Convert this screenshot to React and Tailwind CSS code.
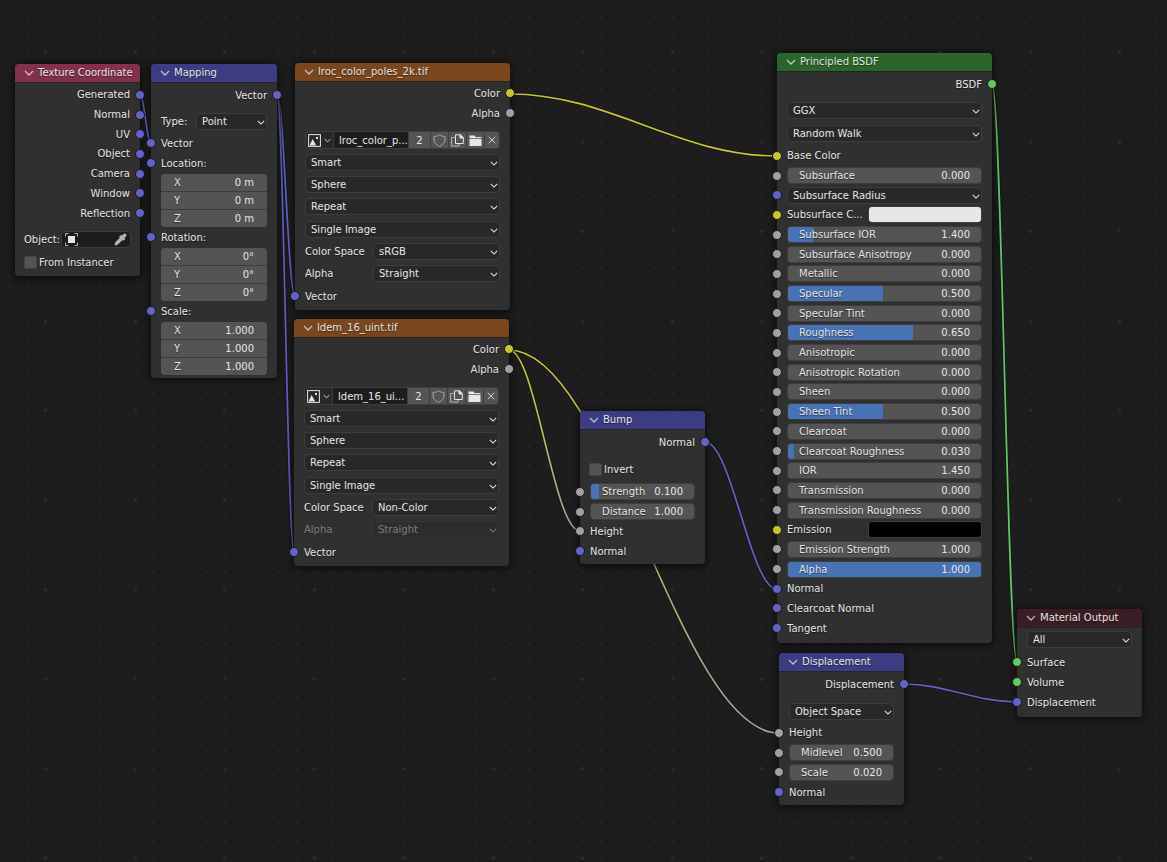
import React, { useId, useState } from "react";
import { Pipette } from "lucide-react";

const SOCKETS = {
  vector: { bg: "bg-[#6363c7]", hex: "#6363c7" },
  value: { bg: "bg-[#a1a1a1]", hex: "#a1a1a1" },
  color: { bg: "bg-[#c7c729]", hex: "#c7c729" },
  shader: { bg: "bg-[#63c763]", hex: "#63c763" },
};

const LINKS = [
  { from: [140, 95], to: [151, 143], types: ["vector", "vector"] },
  { from: [277, 95], to: [295, 297], types: ["vector", "vector"] },
  { from: [277, 95], to: [294, 553], types: ["vector", "vector"] },
  { from: [510, 94], to: [777, 156], types: ["color", "color"] },
  { from: [509, 350], to: [779, 733], types: ["color", "value"] },
  { from: [509, 350], to: [580, 531], types: ["color", "value"] },
  { from: [705, 442], to: [777, 589], types: ["vector", "vector"] },
  { from: [992, 84], to: [1017, 662], types: ["shader", "shader"] },
  { from: [904, 684], to: [1017, 702], types: ["vector", "vector"] },
];

// how far the bezier handles reach, as a share of the horizontal distance
const BEND = 0.37;

const BSDF_ROWS = [
  { type: "color", label: "Base Color" },
  { type: "value", label: "Subsurface", value: "0.000", fill: 0 },
  { type: "vector", label: "Subsurface Radius", kind: "select" },
  { type: "color", label: "Subsurface C...", kind: "swatch", value: "#e7e7e7" },
  { type: "value", label: "Subsurface IOR", value: "1.400", fill: 13 },
  { type: "value", label: "Subsurface Anisotropy", value: "0.000", fill: 0 },
  { type: "value", label: "Metallic", value: "0.000", fill: 0 },
  { type: "value", label: "Specular", value: "0.500", fill: 49 },
  { type: "value", label: "Specular Tint", value: "0.000", fill: 0 },
  { type: "value", label: "Roughness", value: "0.650", fill: 65 },
  { type: "value", label: "Anisotropic", value: "0.000", fill: 0 },
  { type: "value", label: "Anisotropic Rotation", value: "0.000", fill: 0 },
  { type: "value", label: "Sheen", value: "0.000", fill: 0 },
  { type: "value", label: "Sheen Tint", value: "0.500", fill: 49 },
  { type: "value", label: "Clearcoat", value: "0.000", fill: 0 },
  { type: "value", label: "Clearcoat Roughness", value: "0.030", fill: 3 },
  { type: "value", label: "IOR", value: "1.450", fill: 0 },
  { type: "value", label: "Transmission", value: "0.000", fill: 0 },
  { type: "value", label: "Transmission Roughness", value: "0.000", fill: 0 },
  { type: "color", label: "Emission", kind: "swatch", value: "#000000" },
  { type: "value", label: "Emission Strength", value: "1.000", fill: 0 },
  { type: "value", label: "Alpha", value: "1.000", fill: 100 },
  { type: "vector", label: "Normal" },
  { type: "vector", label: "Clearcoat Normal" },
  { type: "vector", label: "Tangent" },
];

function Grid() {
  const steps = [0, 1, 2, 3, 4, 5, 6, 7, 8, 9];
  const at = (i) => Math.round(10 + i * 17.9);
  return (
    <svg className="absolute inset-0 w-full h-full" aria-hidden="true">
      <defs>
        <pattern id="dots" x="35" y="42" width="179" height="179" patternUnits="userSpaceOnUse">
          {steps.map((i) =>
            steps.map((j) =>
              i % 5 === 0 && j % 5 === 0 ? (
                <rect key={`${i}-${j}`} x={at(i) - 1} y={at(j) - 1} width="3" height="3" fill="#2a2a2a" />
              ) : (
                <rect key={`${i}-${j}`} x={at(i)} y={at(j)} width="2" height="2" fill="#272727" />
              )
            )
          )}
        </pattern>
      </defs>
      <rect width="100%" height="100%" fill="url(#dots)" />
    </svg>
  );
}

function Links() {
  return (
    <svg className="absolute inset-0 w-full h-full" fill="none" aria-hidden="true">
      {LINKS.map(({ from, to, types }, i) => {
        const [x1, y1] = from;
        const [x2, y2] = to;
        const reach = (x2 - x1) * BEND;
        const d = `M${x1} ${y1}C${x1 + reach} ${y1} ${x2 - reach} ${y2} ${x2} ${y2}`;
        return (
          <g key={i}>
            <linearGradient id={`link${i}`} gradientUnits="userSpaceOnUse" x1={x1} y1={y1} x2={x2} y2={y2}>
              <stop offset="0" stopColor={SOCKETS[types[0]].hex} />
              <stop offset="1" stopColor={SOCKETS[types[1]].hex} />
            </linearGradient>
            <path d={d} stroke="#101010" strokeOpacity="0.6" strokeWidth="3.4" />
            <path d={d} stroke={`url(#link${i})`} strokeWidth="1.7" />
          </g>
        );
      })}
    </svg>
  );
}

function Chevron({ className }) {
  return (
    <svg viewBox="0 0 10 6" className={className} fill="none" stroke="currentColor" aria-hidden="true">
      <path d="M1 1l4 4 4-4" strokeWidth="1.3" />
    </svg>
  );
}

function Node({ title, place, header, children }) {
  const [open, setOpen] = useState(true);
  return (
    <section className={`absolute rounded-sm bg-[#303030] shadow-[0_1px_7px_2px_rgba(0,0,0,0.55)] ${place}`}>
      <header className={`h-[19px] rounded-t-sm border-b border-[#242424] flex items-center gap-1 pl-[9px] ${header}`}>
        <button aria-label={`Collapse ${title}`} onClick={() => setOpen(!open)} className="text-white/65">
          <Chevron className="w-2.5 h-1.5" />
        </button>
        <h2 className="leading-[18px]">{title}</h2>
      </header>
      {open && children}
    </section>
  );
}

function Socket({ type, side }) {
  return (
    <span
      className={`absolute top-1/2 -translate-y-1/2 size-[10px] rounded-full border border-[#1a1a1a] ${SOCKETS[type].bg} ${
        side === "out" ? "-right-[5px]" : "-left-[5px]"
      }`}
    />
  );
}

function Output({ type, label }) {
  return (
    <div className="relative min-h-[19px] px-2.5 flex items-center justify-end">
      {label}
      <Socket type={type} side="out" />
    </div>
  );
}

function Input({ type, label, children }) {
  return (
    <div className="relative min-h-[19px] px-2.5 flex items-center">
      <Socket type={type} side="in" />
      {children || label}
    </div>
  );
}

function Select({ value, id, label, disabled }) {
  return (
    <div className={`relative flex flex-1 min-w-0 ${disabled ? "opacity-40" : ""}`}>
      <select
        id={id}
        aria-label={label}
        disabled={disabled}
        className="w-full h-[17px] appearance-none rounded-sm border border-[#3d3d3d] bg-[#282828] pl-[5px] pr-4 leading-[15px]"
      >
        <option>{value}</option>
      </select>
      <Chevron className="absolute right-[2px] top-[7px] w-2 h-[5px] pointer-events-none" />
    </div>
  );
}

function LabeledSelect({ label, value, labelWidth, disabled }) {
  const id = useId();
  return (
    <div className="flex items-center px-2.5">
      <label htmlFor={id} className={`${labelWidth} ${disabled ? "opacity-40" : ""}`}>
        {label}
      </label>
      <Select id={id} value={value} disabled={disabled} />
    </div>
  );
}

function NumberField({ label, value, fill = 0, joined }) {
  return (
    <label
      className={`relative flex-1 h-[17px] flex items-center overflow-hidden bg-[#545454] ${
        joined ? "px-[13px]" : "px-[11px] rounded-sm border border-[#3d3d3d]"
      }`}
    >
      <span className="absolute inset-y-0 left-0 bg-[#4772b3]" style={{ width: `${fill}%` }} />
      <span className="relative whitespace-nowrap">{label}</span>
      <input type="text" defaultValue={value} className="relative flex-1 w-9 min-w-0 bg-transparent text-right" />
    </label>
  );
}

function Swatch({ label, value }) {
  const id = useId();
  return (
    <>
      <label htmlFor={id} className="flex-1">
        {label}
      </label>
      <input
        id={id}
        type="color"
        defaultValue={value}
        className="w-[114px] h-[17px] appearance-none rounded-sm overflow-hidden border border-[#3d3d3d] [&::-webkit-color-swatch]:border-0 [&::-webkit-color-swatch-wrapper]:p-0"
      />
    </>
  );
}

function Checkbox({ label }) {
  return (
    <label className="h-[18px] flex items-center gap-[2px] px-[9px]">
      <input type="checkbox" className="size-[13px] appearance-none rounded-xs bg-[#545454] border border-[#454545] checked:bg-[#4772b3]" />
      {label}
    </label>
  );
}

function VectorInput({ label, values }) {
  return (
    <>
      <div className="h-5 grid">
        <Input type="vector" label={label} />
      </div>
      <div className="mx-2.5 mt-px flex flex-col gap-px rounded-sm overflow-hidden bg-[#3d3d3d]">
        {["X", "Y", "Z"].map((axis, i) => (
          <div key={axis} className="flex">
            <NumberField label={axis} value={values[i]} joined />
          </div>
        ))}
      </div>
    </>
  );
}

function ImageBlock({ name }) {
  const cell = "grid place-items-center bg-[#545454]";
  return (
    <div className="mt-2 mx-2.5 h-[18px] flex gap-px rounded-sm overflow-hidden border border-[#3d3d3d] bg-[#3d3d3d]">
      <button aria-label="Browse image" className="w-[27px] flex items-center justify-center gap-[3px] bg-[#282828]">
        <svg viewBox="0 0 13 13" className="size-[13px] shrink-0" aria-hidden="true">
          <rect x="0.6" y="0.6" width="11.8" height="11.8" fill="none" stroke="#e6e6e6" strokeWidth="1" />
          <path d="M1.5 11.5L4.6 5l3.6 6.5z" fill="#e6e6e6" />
          <rect x="8" y="3" width="2" height="2" fill="#e6e6e6" />
        </svg>
        <Chevron className="w-[7px] h-[5px] shrink-0" />
      </button>
      <input aria-label="Image name" type="text" defaultValue={name} className="w-[74px] min-w-0 bg-[#1d1d1d] pl-[5px]" />
      <button aria-label="Users" className={`w-[21px] ${cell}`}>2</button>
      <button aria-label="Fake user" className={`w-[17px] ${cell}`}>
        <svg viewBox="0 0 13 13" className="size-[13px]" fill="none" stroke="#a6a6a6" aria-hidden="true">
          <path d="M6.5 0.8C5 2 3 2.5 1 2.5V6c0 3 2.5 5 5.5 6.4C9.5 11 12 9 12 6V2.5C10 2.5 8 2 6.500 0.800z" />
        </svg>
      </button>
      <button aria-label="New image" className={`w-[17px] ${cell}`}>
        <svg viewBox="0 0 13 13" className="size-[13px]" fill="none" stroke="#e6e6e6" aria-hidden="true">
          <path d="M3.5 3.5H0.6V12H8V9.5" stroke="#b5b5b5" />
          <path d="M4.5 0.8H9.5L12.3 3.5V9.5H4.500z" />
          <path d="M9 0.8V4H12.3z" fill="#e6e6e6" />
        </svg>
      </button>
      <button aria-label="Open image" className={`w-[17px] ${cell}`}>
        <svg viewBox="0 0 13 13" className="size-[13px]" fill="#e6e6e6" aria-hidden="true">
          <path d="M0.5 1.5H5.5L6.5 3H12.5V4.2H0.500z" />
          <path d="M0.5 5H12.5V12H0.500z" />
        </svg>
      </button>
      <button aria-label="Unlink image" className={`flex-1 ${cell}`}>
        <svg viewBox="0 0 8 8" className="size-2" stroke="#d0d0d0" aria-hidden="true">
          <path d="M0.8 0.8l6.4 6.4M7.2 0.8L0.8 7.2" />
        </svg>
      </button>
    </div>
  );
}

function ImageTexture({ title, name, place, colorSpace, alphaOff }) {
  return (
    <Node title={title} place={`w-[215px] pb-1 ${place}`} header="bg-[#79461d]">
      <div className="mt-px h-10 grid auto-rows-fr">
        <Output type="color" label="Color" />
        <Output type="value" label="Alpha" />
      </div>
      <ImageBlock name={name} />
      <div className="mt-0.5 h-[134px] grid auto-rows-fr items-center">
        {["Smart", "Sphere", "Repeat", "Single Image"].map((option) => (
          <div key={option} className="flex px-2.5">
            <Select value={option} label={option} />
          </div>
        ))}
        <LabeledSelect label="Color Space" value={colorSpace} labelWidth="w-[68px]" />
        <LabeledSelect label="Alpha" value="Straight" labelWidth="w-[68px]" disabled={alphaOff} />
      </div>
      <div className="mt-px h-5 grid">
        <Input type="vector" label="Vector" />
      </div>
    </Node>
  );
}

function TextureCoordinate() {
  return (
    <Node title="Texture Coordinate" place="left-[15px] top-[64px] w-[125px] pb-[5px]" header="bg-[#83314a]">
      <div className="mt-0.5 h-[138px] grid auto-rows-fr">
        {["Generated", "Normal", "UV", "Object", "Camera", "Window", "Reflection"].map((name) => (
          <Output key={name} type="vector" label={name} />
        ))}
      </div>
      <div className="mt-2 px-[9px] flex items-center">
        Object:
        <button
          aria-label="Pick object"
          className="ml-auto w-[70px] shrink-0 h-[17px] px-[3px] flex items-center justify-between rounded-sm border border-[#3d3d3d] bg-[#1d1d1d]"
        >
          <svg viewBox="0 0 13 13" className="size-[13px]" aria-hidden="true">
            <rect x="3" y="3" width="7" height="7" fill="#e6e6e6" />
            <path
              d="M0.5 3.5V0.5H3.5M9.5 0.5H12.5V3.5M12.5 9.5V12.5H9.5M3.5 12.5H0.5V9.5"
              fill="none"
              stroke="#b0b0b0"
            />
          </svg>
          <Pipette className="size-[13px]" fill="#b0b0b0" color="#b8b8b8" />
        </button>
      </div>
      <div className="mt-[5px]">
        <Checkbox label="From Instancer" />
      </div>
    </Node>
  );
}

function Mapping() {
  return (
    <Node title="Mapping" place="left-[151px] top-[64px] w-[126px] pb-[3px]" header="bg-[#3c3c83]">
      <div className="mt-0.5 h-5 grid">
        <Output type="vector" label="Vector" />
      </div>
      <div className="mt-2">
        <LabeledSelect label="Type:" value="Point" labelWidth="w-[35px]" />
      </div>
      <div className="mt-[3px] h-5 grid">
        <Input type="vector" label="Vector" />
      </div>
      <VectorInput label="Location:" values={["0 m", "0 m", "0 m"]} />
      <VectorInput label="Rotation:" values={["0°", "0°", "0°"]} />
      <VectorInput label="Scale:" values={["1.000", "1.000", "1.000"]} />
    </Node>
  );
}

function Bump() {
  return (
    <Node title="Bump" place="left-[580px] top-[411px] w-[125px] pb-[3px]" header="bg-[#3c3c83]">
      <div className="mt-0.5 h-5 grid">
        <Output type="vector" label="Normal" />
      </div>
      <div className="mt-2">
        <Checkbox label="Invert" />
      </div>
      <div className="mt-1 h-[79px] grid auto-rows-fr">
        <Input type="value">
          <NumberField label="Strength" value="0.100" fill={8} />
        </Input>
        <Input type="value">
          <NumberField label="Distance" value="1.000" />
        </Input>
        <Input type="value" label="Height" />
        <Input type="vector" label="Normal" />
      </div>
    </Node>
  );
}

function PrincipledBSDF() {
  return (
    <Node title="Principled BSDF" place="left-[777px] top-[53px] w-[215px] pb-[5px]" header="bg-[#2b652b]">
      <div className="mt-0.5 h-5 grid">
        <Output type="shader" label="BSDF" />
      </div>
      <div className="mt-2 px-2.5 flex flex-col gap-1.5">
        <Select value="GGX" label="Distribution" />
        <Select value="Random Walk" label="Subsurface method" />
      </div>
      <div className="mt-1 h-[492px] grid auto-rows-fr">
        {BSDF_ROWS.map(({ type, label, kind, value, fill }) => (
          <Input key={label} type={type} label={label}>
            {kind === "select" && <Select value={label} label={label} />}
            {kind === "swatch" && <Swatch label={label} value={value} />}
            {!kind && value && <NumberField label={label} value={value} fill={fill} />}
            {!kind && !value && label}
          </Input>
        ))}
      </div>
    </Node>
  );
}

function Displacement() {
  return (
    <Node title="Displacement" place="left-[779px] top-[653px] w-[125px] pb-[3px]" header="bg-[#3c3c83]">
      <div className="mt-0.5 h-5 grid">
        <Output type="vector" label="Displacement" />
      </div>
      <div className="mt-[9px] px-2.5 flex">
        <Select value="Object Space" label="Space" />
      </div>
      <div className="mt-[3px] h-[79px] grid auto-rows-fr">
        <Input type="value" label="Height" />
        <Input type="value">
          <NumberField label="Midlevel" value="0.500" />
        </Input>
        <Input type="value">
          <NumberField label="Scale" value="0.020" />
        </Input>
        <Input type="vector" label="Normal" />
      </div>
    </Node>
  );
}

function MaterialOutput() {
  return (
    <Node title="Material Output" place="left-[1017px] top-[609px] w-[125px] pb-[5px]" header="bg-[#3c1d26]">
      <div className="mt-[3px] px-2.5 flex">
        <Select value="All" label="Target" />
      </div>
      <div className="mt-1 h-[60px] grid auto-rows-fr">
        <Input type="shader" label="Surface" />
        <Input type="shader" label="Volume" />
        <Input type="vector" label="Displacement" />
      </div>
    </Node>
  );
}

export default function App() {
  return (
    <main className="relative min-h-screen overflow-hidden bg-[#1d1d1d] font-['DejaVu_Sans',sans-serif] text-[10px] leading-[17px] text-[#e6e6e6] [text-shadow:0_1px_1px_rgba(0,0,0,0.5)]">
      <Grid />
      <Links />
      <TextureCoordinate />
      <Mapping />
      <ImageTexture title="lroc_color_poles_2k.tif" name="lroc_color_p..." place="left-[295px] top-[63px]" colorSpace="sRGB" />
      <ImageTexture title="ldem_16_uint.tif" name="ldem_16_ui..." place="left-[294px] top-[319px]" colorSpace="Non-Color" alphaOff />
      <Bump />
      <PrincipledBSDF />
      <Displacement />
      <MaterialOutput />
    </main>
  );
}
